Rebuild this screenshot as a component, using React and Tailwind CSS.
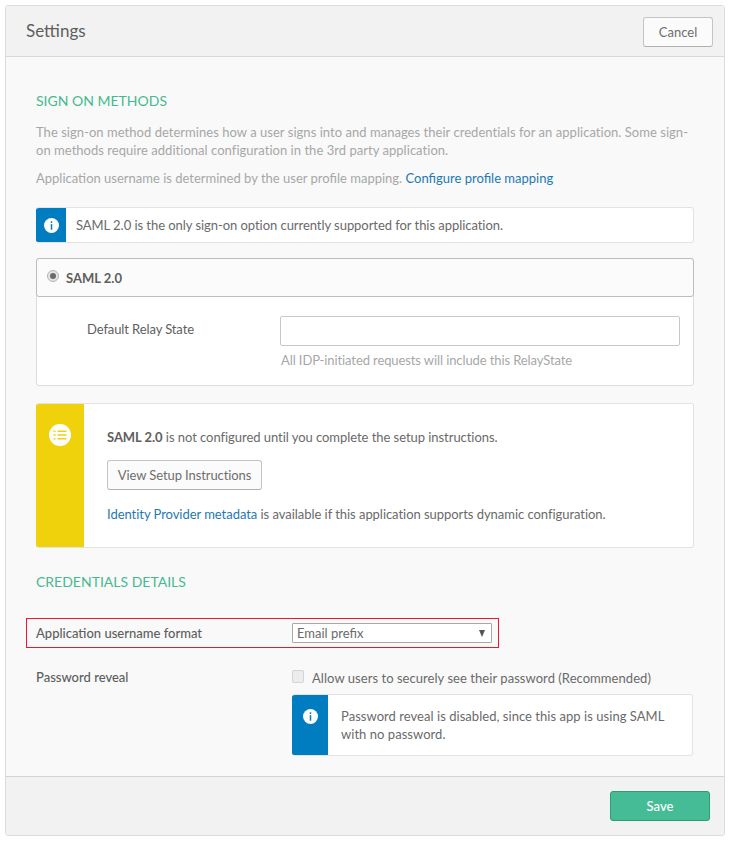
import { useState } from "react";

function InfoIcon({ size = 15 }) {
  return (
    <svg width={size} height={size} viewBox="0 0 16 16" className="block">
      <circle cx="8" cy="8" r="8" fill="#fff" />
      <rect x="7.2" y="3.5" width="1.6" height="1.8" fill="#007cc0" />
      <rect x="7.2" y="6.5" width="1.6" height="6" fill="#007cc0" />
    </svg>
  );
}

function ListIcon() {
  return (
    <svg width="22" height="22" viewBox="0 0 22 22" className="block">
      <circle cx="11" cy="11" r="11" fill="#fff" />
      <rect x="4.5" y="6.5" width="2" height="1.5" fill="#f0d20c" />
      <rect x="4.5" y="10.2" width="2" height="1.5" fill="#f0d20c" />
      <rect x="4.5" y="14" width="2" height="1.5" fill="#f0d20c" />
      <rect x="8.5" y="6.5" width="9" height="1.5" fill="#f0d20c" />
      <rect x="8.5" y="10.2" width="9" height="1.5" fill="#f0d20c" />
      <rect x="8.5" y="14" width="9" height="1.5" fill="#f0d20c" />
    </svg>
  );
}

export default function App() {
  const [relay, setRelay] = useState("");

  return (
    <div className="min-h-[843px] bg-white pt-[5px] pl-[5px] pr-[4px] font-['Lato',sans-serif] text-[13px] leading-[18px] text-[#5e5e5e]">
      <div className="rounded-[3px] border border-[#dcdcdc] bg-[#f9f9f9]">

        {/* HEADER */}
        <div className="flex h-[51px] items-center justify-between border-b border-[#d9d9d9] bg-[#f2f2f2] pl-[20px] pr-[11px]">
          <h1 className="-mt-[1px] text-[17px] font-normal text-[#5e5e5e]">Settings</h1>
          <button className="mt-[1px] h-[30px] w-[70px] rounded-[3px] border border-[#c4c4c4] border-b-[#b0b0b0] bg-[#fbfbfb] text-[13px] text-[#6e6e6e]">
            Cancel
          </button>
        </div>

        {/* BODY */}
        <div className="px-[30px] pt-[35px] pb-[20px]">
          <h2 className="text-[14px] leading-[18px] font-normal text-[#46b98f]">SIGN ON METHODS</h2>

          <p className="mt-[13px] tracking-[0.035px] text-[#a7a7a7]">
            The sign-on method determines how a user signs into and manages their credentials for an application. Some sign-on methods require additional configuration in the 3rd party application.
          </p>
          <p className="mt-[10px] text-[#a7a7a7]">
            Application username is determined by the user profile mapping.{" "}
            <a className="text-[#1f78b4]">Configure profile mapping</a>
          </p>

          {/* SAML NOTICE */}
          <div className="mt-[20px] flex h-[36px] overflow-hidden rounded-[3px] border border-l-0 border-[#e3e3e3] bg-white">
            <div className="flex w-[30px] shrink-0 items-center justify-center bg-[#007cc0]">
              <InfoIcon />
            </div>
            <div className="flex items-center pl-[10px] tracking-[-0.05px] text-[#6a6a6a]">
              SAML 2.0 is the only sign-on option currently supported for this application.
            </div>
          </div>

          {/* SAML OPTION */}
          <div className="mt-[15px] rounded-[3px] border border-[#dcdcdc] bg-white">
            <div className="-m-px flex h-[39px] items-center rounded-[3px] border border-[#bdbdbd] bg-[#fbfbfb] pl-[10px]">
              <span className="mb-[3px] flex h-[12px] w-[12px] items-center justify-center rounded-full border border-[#b4b4b4] bg-[#e4e4e4]">
                <span className="h-[6px] w-[6px] rounded-full bg-[#6a6a6a]" />
              </span>
              <span className="ml-[7px] font-bold text-[#5e5e5e]">SAML 2.0</span>
            </div>
            <div className="flex pt-[20px] pb-[16px] pl-[50px] pr-[13px]">
              <label className="mt-[4px] w-[193px] shrink-0 tracking-[-0.1px] text-[#5e5e5e]">Default Relay State</label>
              <div className="flex-1">
                <input
                  value={relay}
                  onChange={(e) => setRelay(e.target.value)}
                  className="block h-[30px] w-full rounded-[2px] border border-[#c8c8c8] bg-white"
                />
                <p className="ml-[1px] mt-[5px] tracking-[-0.1px] text-[#a7a7a7]">All IDP-initiated requests will include this RelayState</p>
              </div>
            </div>
          </div>

          {/* SETUP NOTICE */}
          <div className="mt-[17px] flex h-[145px] overflow-hidden rounded-[3px] border border-l-0 border-[#e3e3e3] bg-white">
            <div className="flex w-[48px] shrink-0 justify-center bg-[#f0d20c] pt-[20px]">
              <ListIcon />
            </div>
            <div className="pl-[23px] pt-[24px]">
              <p className="tracking-[-0.05px] text-[#6a6a6a]"><b className="text-[#5e5e5e]">SAML 2.0</b> is not configured until you complete the setup instructions.</p>
              <button className="mt-[14px] block h-[30px] w-[155px] rounded-[3px] border border-[#c4c4c4] border-b-[#b0b0b0] bg-[#fbfbfb] text-[13px] tracking-[-0.1px] text-[#6e6e6e]">
                View Setup Instructions
              </button>
              <p className="mt-[15px] tracking-[-0.045px] text-[#6a6a6a]">
                <a className="text-[#1f78b4]">Identity Provider metadata</a> is available if this application supports dynamic configuration.
              </p>
            </div>
          </div>

          <h2 className="mt-[25px] text-[14px] leading-[18px] font-normal text-[#46b98f]">CREDENTIALS DETAILS</h2>

          {/* USERNAME FORMAT */}
          <div className="-ml-[10px] mt-[27px] flex h-[30px] w-[473px] items-center border border-[#e8192c] pl-[9px]">
            <label className="w-[256px] shrink-0 font-medium text-[#5e5e5e]">Application username format</label>
            <div className="flex h-[20px] w-[200px] items-center justify-between rounded-[1px] border border-[#a9a9a9] bg-white pl-[4px] pr-[6px] text-[#6a6a6a]">
              <span>Email prefix</span>
              <span className="h-0 w-0 border-x-[3.5px] border-t-[7px] border-x-transparent border-t-[#555]" />
            </div>
          </div>

          {/* PASSWORD REVEAL */}
          <div className="mt-[20px] flex">
            <label className="w-[256px] shrink-0 font-medium text-[#5e5e5e]">Password reveal</label>
            <div className="w-[401px]">
              <div className="flex items-start">
                <span className="mt-[2px] h-[13px] w-[12px] rounded-[2px] border border-[#d4d4d4] bg-[#ececec]" />
                <span className="ml-[8px] mt-[1px] tracking-[0.05px] text-[#6a6a6a]">Allow users to securely see their password (Recommended)</span>
              </div>
              <div className="mt-[7px] flex h-[62px] overflow-hidden rounded-[3px] border border-l-0 border-[#e3e3e3] bg-white">
                <div className="flex w-[36px] shrink-0 justify-center bg-[#007cc0] pt-[14px]">
                  <InfoIcon />
                </div>
                <p className="pl-[13px] pr-[20px] pt-[12px] tracking-[0.04px] text-[#6a6a6a]">
                  Password reveal is disabled, since this app is using SAML with no password.
                </p>
              </div>
            </div>
          </div>
        </div>

        {/* FOOTER */}
        <div className="flex h-[59px] items-center justify-end rounded-b-[3px] border-t border-[#d4d4d4] bg-[#f2f2f2] pr-[14px]">
          <button className="h-[30px] w-[100px] rounded-[3px] border border-[#2f9c78] bg-[#46bc96] text-[13px] font-medium text-white">
            Save
          </button>
        </div>
      </div>
    </div>
  );
}
